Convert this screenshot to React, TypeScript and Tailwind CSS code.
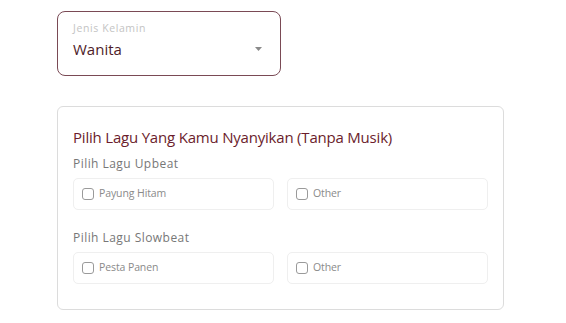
import React from "react";

function Option({ label }: { label: string }) {
  return (
    <div className="flex items-center h-[32px] border border-[#efefef] rounded-[5px] px-[8px] gap-[5px]">
      <span className="w-[12px] h-[12px] border border-[#9a9a9a] rounded-[3px] bg-white" />
      <span className="text-[10.5px] tracking-[-0.1px] text-[#8a8a8a]">{label}</span>
    </div>
  );
}

export default function App() {
  return (
    <div className="w-[566px] h-[323px] bg-white" style={{ fontFamily: "'Open Sans', 'Noto Sans', sans-serif" }}>
      <div className="pl-[57px] pt-[11px]">
        <div className="w-[224px] h-[65px] border border-[#7a4a55] rounded-[8px] px-[15px] pt-[9px]">
          <div className="text-[10.5px] tracking-[0.6px] text-[#c4c4c4] leading-[14px]">Jenis Kelamin</div>
          <div className="flex items-center justify-between mt-[4px] pr-[3px]">
            <span className="text-[15px] text-[#4e1c28] leading-[20px]">Wanita</span>
            <svg width="7" height="4" viewBox="0 0 7 4"><path d="M0 0h7L3.5 4z" fill="#8a8a8a" /></svg>
          </div>
        </div>
      </div>
      <div className="pl-[57px] pt-[30px]">
        <div className="w-[447px] h-[204px] border border-[#dcdcdc] rounded-[6px] px-[15px] pt-[19px]">
          <div className="text-[15px] tracking-[-0.2px] text-[#6b1d2c] leading-[22px]">Pilih Lagu Yang Kamu Nyanyikan (Tanpa Musik)</div>
          <div className="text-[12px] tracking-[0.45px] text-[#777] mt-[8px] leading-[16px]">Pilih Lagu Upbeat</div>
          <div className="grid grid-cols-2 gap-[13px] mt-[6px]">
            <Option label="Payung Hitam" />
            <Option label="Other" />
          </div>
          <div className="text-[12px] tracking-[0.45px] text-[#777] mt-[20px] leading-[16px]">Pilih Lagu Slowbeat</div>
          <div className="grid grid-cols-2 gap-[13px] mt-[6px]">
            <Option label="Pesta Panen" />
            <Option label="Other" />
          </div>
        </div>
      </div>
    </div>
  );
}
